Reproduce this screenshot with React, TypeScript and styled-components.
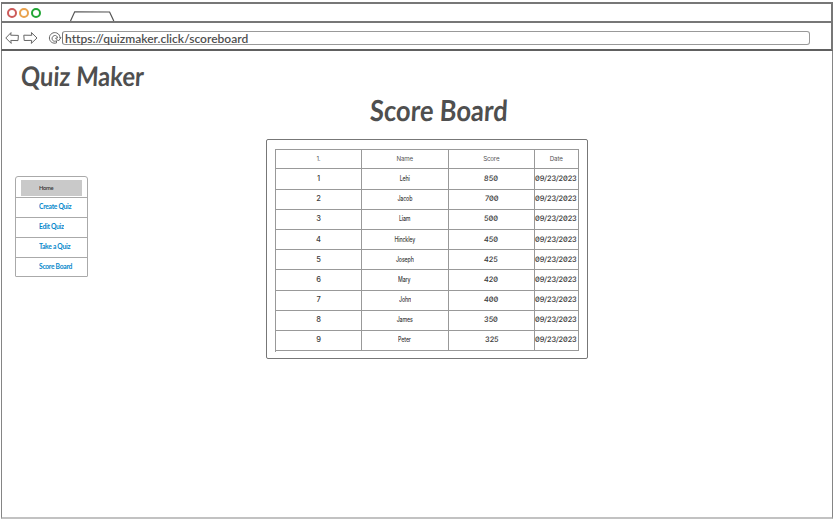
import React from "react";
import styled, { createGlobalStyle } from "styled-components";

const GlobalStyle = createGlobalStyle`
  * { box-sizing: border-box; }
  body { margin: 0; background: #fff; overflow: hidden; }
`;

const ink = "#4f4f4f";

const Window = styled.div`
  width: 834px;
  height: 521px;
  padding: 2px 1px 2px 1px;
  font-family: Lato, "Open Sans", sans-serif;
  color: ${ink};
  display: flex;
  flex-direction: column;
`;

const Chrome = styled.header`
  height: 49px;
  flex: none;
  border: solid #777;
  border-width: 2px 2px 2px 1px;
  border-bottom-color: #606060;
  display: flex;
  flex-direction: column;
`;

const TabBar = styled.div`
  height: 19px;
  flex: none;
  border-bottom: 2px solid #777;
  display: flex;
  align-items: flex-end;
  padding-left: 5px;
`;

const Lights = styled.div`
  display: flex;
  gap: 2.2px;
  height: 16px;
  align-items: center;
`;

const Light = styled.i<{ $color: string }>`
  width: 10px;
  height: 10px;
  border: 2px solid ${(p) => p.$color};
  border-radius: 50%;
`;

const TabShape = styled.svg`
  margin-left: 28px;
  display: block;
  overflow: visible;
`;

const AddressRow = styled.div`
  flex: 1;
  display: flex;
  align-items: center;
  padding: 4px 0 0 3px;
`;

const NavIcons = styled.svg`
  display: block;
  flex: none;
`;

const AddressField = styled.div`
  width: 748px;
  height: 14px;
  border: 1px solid #999;
  border-left-color: #777;
  border-radius: 3px;
  display: flex;
  align-items: center;
  padding-left: 2px;
`;

const Url = styled.span`
  font: 600 12px/14px Lato, sans-serif;
  letter-spacing: 0.01px;
  white-space: nowrap;
  padding-top: 1px;
`;

const Content = styled.main`
  flex: 1;
  border: solid #858585;
  border-width: 0 1px 2px 1px;
  border-bottom-color: #c2c2c2;
  padding: 9px 0 0 13px;
`;

const Brand = styled.h1`
  margin: 0 0 0 6px;
  height: 32px;
  font: 700 27px/31px Lato, sans-serif;
  transform: skewX(-3deg) scaleX(0.88);
  transform-origin: left;
  white-space: nowrap;
`;

const Columns = styled.div`
  display: grid;
  grid-template-columns: 73px 322px;
  column-gap: 178px;
`;

const Menu = styled.nav`
  margin-top: 84px;
  height: 101px;
  border: 1px solid #aaa;
  border-radius: 3px 3px 1px 1px;
  display: grid;
  grid-template-rows: 20px repeat(4, 20px);
`;

const MenuItem = styled.a<{ $active?: boolean }>`
  display: flex;
  align-items: center;
  padding: 0 0 3px 23px;
  font: 700 7px/10px Lato, sans-serif;
  letter-spacing: -0.3px;
  color: #0788cc;
  border-top: 1px solid #aaa;
  ${(p) =>
    p.$active &&
    `
    border-top: 0;
    color: #333;
    font-weight: 600;
    font-size: 6px;
    background: #c9c9c9;
    margin: 3px 5px 1px 5px;
    padding: 0 0 0 18px;
  `}
`;

const MenuLabel = styled.span`
  display: block;
  transform: scaleX(0.96);
  transform-origin: left;
`;

const Board = styled.section`
  display: flex;
  flex-direction: column;
  align-items: center;
`;

const BoardTitle = styled.h2`
  margin: 0;
  height: 47px;
  font: 700 29px/35px Lato, sans-serif;
  transform: translateX(11.5px) skewX(-3deg) scaleX(0.88);
  white-space: nowrap;
`;

const Frame = styled.div`
  width: 322px;
  height: 220px;
  border: 1px solid #777;
  border-radius: 2px;
  padding: 9px 8px;
`;

const Table = styled.div`
  width: 304px;
  height: 203px;
  border: solid #999;
  border-width: 1px 0 0 1px;
  display: grid;
  grid-template-rows: 19.4px repeat(9, 20.2px);
`;

const Row = styled.div<{ $head?: boolean }>`
  display: grid;
  grid-template-columns: 86px 86.5px 86.5px 43.5px;
  font: ${(p) => (p.$head ? "400 6.2px" : "500 7.5px")} / 10px Inter, sans-serif;
  font-feature-settings: "zero";
  color: ${(p) => (p.$head ? "#555" : "#3c3c3c")};
`;

const Cell = styled.div`
  border: solid #999;
  border-width: 0 1px 1px 0;
  display: flex;
  align-items: center;
  justify-content: center;
  white-space: nowrap;
  letter-spacing: -0.17px;
`;

const PlayerName = styled.span`
  font: 500 7px/10px Inter, sans-serif;
  transform: scaleX(0.75);
`;

const Digits = styled.span`
  transform: skewX(-4deg);
`;

const links = ["Home", "Create Quiz", "Edit Quiz", "Take a Quiz", "Score Board"];
const scores: [string, number][] = [
  ["Lehi", 850],
  ["Jacob", 700],
  ["Liam", 500],
  ["Hinckley", 450],
  ["Joseph", 425],
  ["Mary", 420],
  ["John", 400],
  ["James", 350],
  ["Peter", 325],
];

export default function App() {
  return (
    <>
      <GlobalStyle />
      <Window>
        <Chrome>
          <TabBar>
            <Lights>
              <Light $color="#cc5b5a" />
              <Light $color="#e9a24d" />
              <Light $color="#22a636" />
            </Lights>
            <TabShape width="46" height="10" viewBox="0 0 46 10" fill="none" stroke="#555" strokeWidth="1.2">
              <path d="M1.5 10 5.7 .8 40.6 1 44.8 10" />
            </TabShape>
          </TabBar>
          <AddressRow>
            <NavIcons width="57" height="16" viewBox="0 0 57 16" fill="none" stroke="#666" strokeWidth="1" strokeLinejoin="round">
              <path d="M.8 8 6 2.6 5.7 5.2 13.4 5.4 13 10.6 5.8 10.4 6.2 13.4Z" />
              <path d="M32 8 26.4 2.5 26.8 5.3 18.8 5.2 19.2 10.5 26.7 10.4 26.3 13.4Z" />
              <path d="M51.5 12.9C48 14 44.4 11.8 44.4 8 44.4 4 48.4 1.6 51.8 3 54.2 4 55 6 54.8 7.8L56 7.6 53.4 11 50.6 8.2 52.4 8C52.6 6.4 51 5 49.2 5.6 46.9 6.4 46.4 9 47.8 10.5 48.8 11.5 50.4 11.4 51.5 10.8Z" />
            </NavIcons>
            <AddressField>
              <Url>https://quizmaker.click/scoreboard</Url>
            </AddressField>
          </AddressRow>
        </Chrome>
        <Content>
          <Brand>Quiz Maker</Brand>
          <Columns>
            <Menu>
              {links.map((label, i) => (
                <MenuItem key={label} $active={i === 0}>
                  <MenuLabel>{label}</MenuLabel>
                </MenuItem>
              ))}
            </Menu>
            <Board>
              <BoardTitle>Score Board</BoardTitle>
              <Frame>
                <Table>
                  <Row $head>
                    <Cell>1.</Cell>
                    <Cell>Name</Cell>
                    <Cell>Score</Cell>
                    <Cell>Date</Cell>
                  </Row>
                  {scores.map(([name, score], i) => (
                    <Row key={name}>
                      <Cell>{i + 1}</Cell>
                      <Cell>
                        <PlayerName>{name}</PlayerName>
                      </Cell>
                      <Cell>
                        <Digits>{score}</Digits>
                      </Cell>
                      <Cell>
                        <Digits>09/23/2023</Digits>
                      </Cell>
                    </Row>
                  ))}
                </Table>
              </Frame>
            </Board>
          </Columns>
        </Content>
      </Window>
    </>
  );
}
